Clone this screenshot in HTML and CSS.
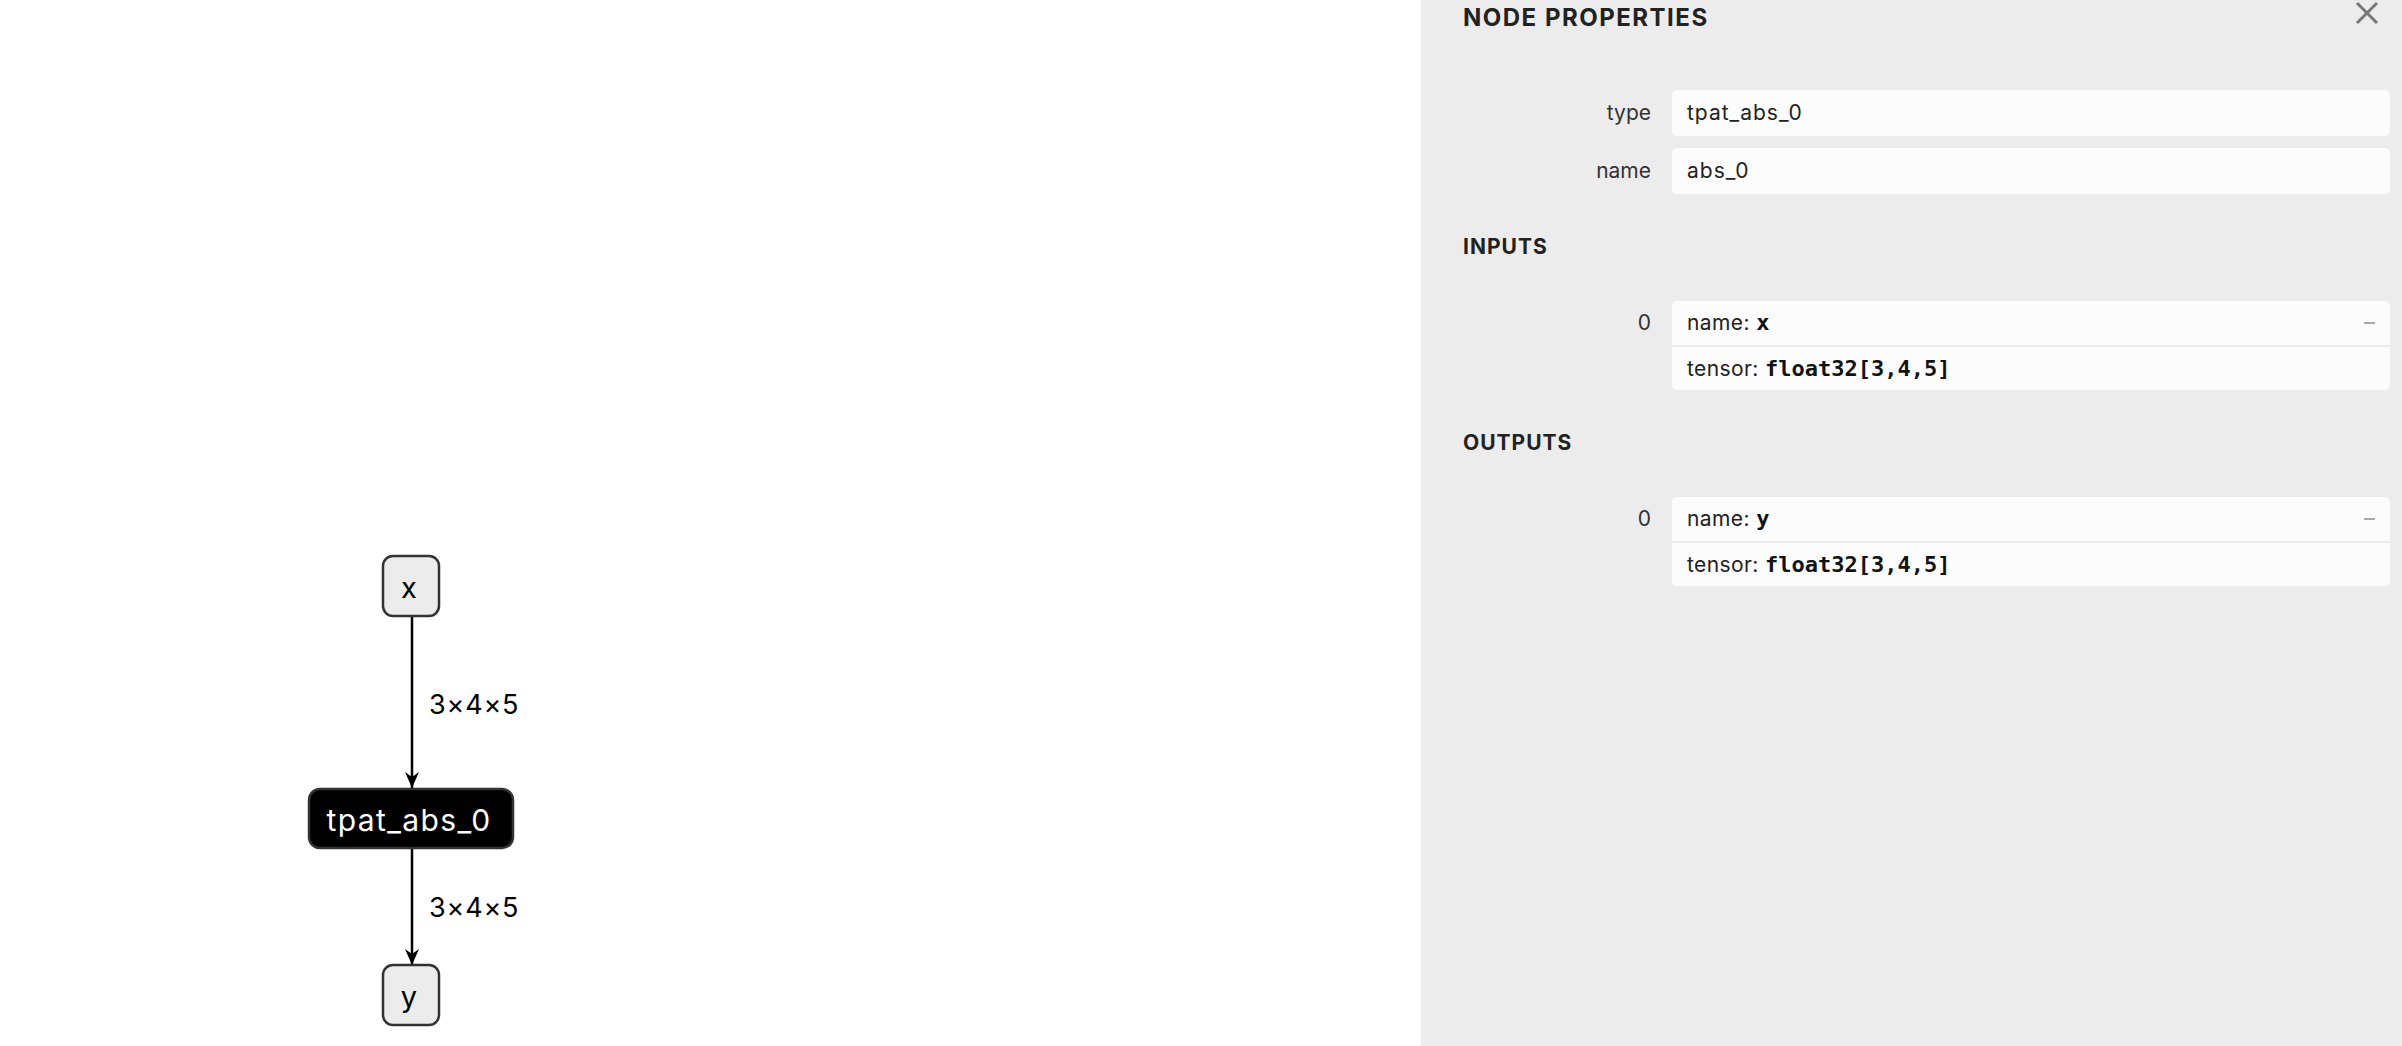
FILE: index.html
```html
<!DOCTYPE html>
<html>
<head>
<meta charset="utf-8">
<link rel="stylesheet" href="styles.css">
</head>
<body>
<div class="app">
  <main class="graph">
    <svg class="canvas" width="1421" height="1046" viewBox="0 0 1421 1046">
      <defs>
        <marker id="arrow" markerWidth="16" markerHeight="14" refX="16" refY="7" orient="auto" markerUnits="userSpaceOnUse">
          <path d="M0 0 L16 7 L0 14 L5 7 Z" fill="#000"/>
        </marker>
      </defs>
      <line class="edge" x1="412" y1="617" x2="412" y2="788" marker-end="url(#arrow)"/>
      <line class="edge" x1="412" y1="849" x2="412" y2="965" marker-end="url(#arrow)"/>
      <text class="edge-label" x="429" y="714">3×4×5</text>
      <text class="edge-label" x="429" y="917">3×4×5</text>
      <rect class="node-io" x="383" y="556" width="56" height="60" rx="10"/>
      <text class="node-io-text" x="409" y="598">x</text>
      <rect class="node-op" x="309" y="789" width="204" height="59" rx="11"/>
      <text class="node-op-text" x="409" y="831">tpat_abs_0</text>
      <rect class="node-io" x="383" y="965" width="56" height="60" rx="10"/>
      <text class="node-io-text" x="409" y="1007">y</text>
    </svg>
  </main>
  <aside class="sidebar">
    <header class="sb-head">
      <h1 class="sb-title">NODE PROPERTIES</h1>
      <span class="close">
        <svg width="24" height="24" viewBox="0 0 24 24"><path d="M2 2 L22 22 M22 2 L2 22" stroke="#777" stroke-width="3" fill="none"/></svg>
      </span>
    </header>
    <div class="prop">
      <div class="prop-name">type</div>
      <div class="prop-value"><div class="val">tpat_abs_0</div></div>
    </div>
    <div class="prop">
      <div class="prop-name">name</div>
      <div class="prop-value"><div class="val">abs_0</div></div>
    </div>
    <h2 class="section">INPUTS</h2>
    <div class="prop">
      <div class="prop-name arg">0</div>
      <div class="prop-value">
        <div class="arg-row"><span>name: <b>x</b></span><span class="minus"></span></div>
        <div class="arg-row sep">tensor:&nbsp;<code>float32[3,4,5]</code></div>
      </div>
    </div>
    <h2 class="section">OUTPUTS</h2>
    <div class="prop">
      <div class="prop-name arg">0</div>
      <div class="prop-value">
        <div class="arg-row"><span>name: <b>y</b></span><span class="minus"></span></div>
        <div class="arg-row sep">tensor:&nbsp;<code>float32[3,4,5]</code></div>
      </div>
    </div>
  </aside>
</div>
</body>
</html>
```
FILE: styles.css
```css
html, body {
  margin: 0;
  padding: 0;
  background: #fff;
  font-family: Inter, "Noto Sans", sans-serif;
  color: #222;
}
.app {
  display: flex;
  width: 2402px;
  height: 1046px;
  overflow: hidden;
}
.graph {
  width: 1421px;
  flex: none;
  background: #fff;
}
.canvas {
  display: block;
}
.edge {
  stroke: #000;
  stroke-width: 2.5;
}
.edge-label {
  font-family: Inter, sans-serif;
  font-size: 27px;
  letter-spacing: 0.8px;
  fill: #000;
}
.node-io {
  fill: #ececec;
  stroke: #333;
  stroke-width: 2.5;
}
.node-io-text {
  font-family: Inter, sans-serif;
  font-size: 29px;
  fill: #000;
  text-anchor: middle;
}
.node-op {
  fill: #000;
  stroke: #333;
  stroke-width: 2.5;
}
.node-op-text {
  font-family: Inter, sans-serif;
  font-size: 30px;
  letter-spacing: 1.4px;
  fill: #fff;
  text-anchor: middle;
}
.sidebar {
  flex: 1;
  background: #ececec;
  padding: 0 12px 0 42px;
  box-sizing: border-box;
}
.sb-head {
  display: flex;
  justify-content: space-between;
  align-items: flex-start;
  height: 32px;
  margin-bottom: 58px;
}
.sb-title {
  margin: 0;
  padding-top: 4px;
  font-size: 24px;
  line-height: 28px;
  font-weight: 700;
  letter-spacing: 1.5px;
  color: #222;
}
.close {
  display: block;
  margin-top: 1px;
  margin-right: 11px;
}
.close svg {
  display: block;
}
.prop {
  display: flex;
  gap: 21px;
  margin-bottom: 12px;
}
.prop-name {
  width: 188px;
  flex: none;
  text-align: right;
  font-size: 21px;
  line-height: 46px;
  color: #333;
}
.prop-name.arg {
  line-height: 44px;
}
.prop-value {
  flex: 1;
  background: #fcfcfc;
  border-radius: 5px;
  overflow: hidden;
}
.val {
  padding: 0 15px;
  font-size: 21px;
  letter-spacing: 1px;
  line-height: 46px;
  color: #222;
}
.arg-row {
  display: flex;
  justify-content: space-between;
  align-items: center;
  padding: 0 15px;
  font-size: 21px;
  letter-spacing: 0.4px;
  line-height: 44px;
  height: 44px;
  color: #222;
}
.arg-row.sep {
  justify-content: flex-start;
  border-top: 2px solid #ececec;
  height: 43px;
  line-height: 43px;
}
.arg-row b, .arg-row code {
  font-family: "DejaVu Sans Mono", monospace;
  font-weight: 700;
  font-size: 22px;
  letter-spacing: 0;
  color: #111;
}
.minus {
  display: block;
  width: 11px;
  height: 2px;
  background: #aaa;
}
.section {
  margin: 41px 0 42px;
  font-size: 21px;
  line-height: 24px;
  font-weight: 700;
  letter-spacing: 1px;
  color: #222;
}
```
